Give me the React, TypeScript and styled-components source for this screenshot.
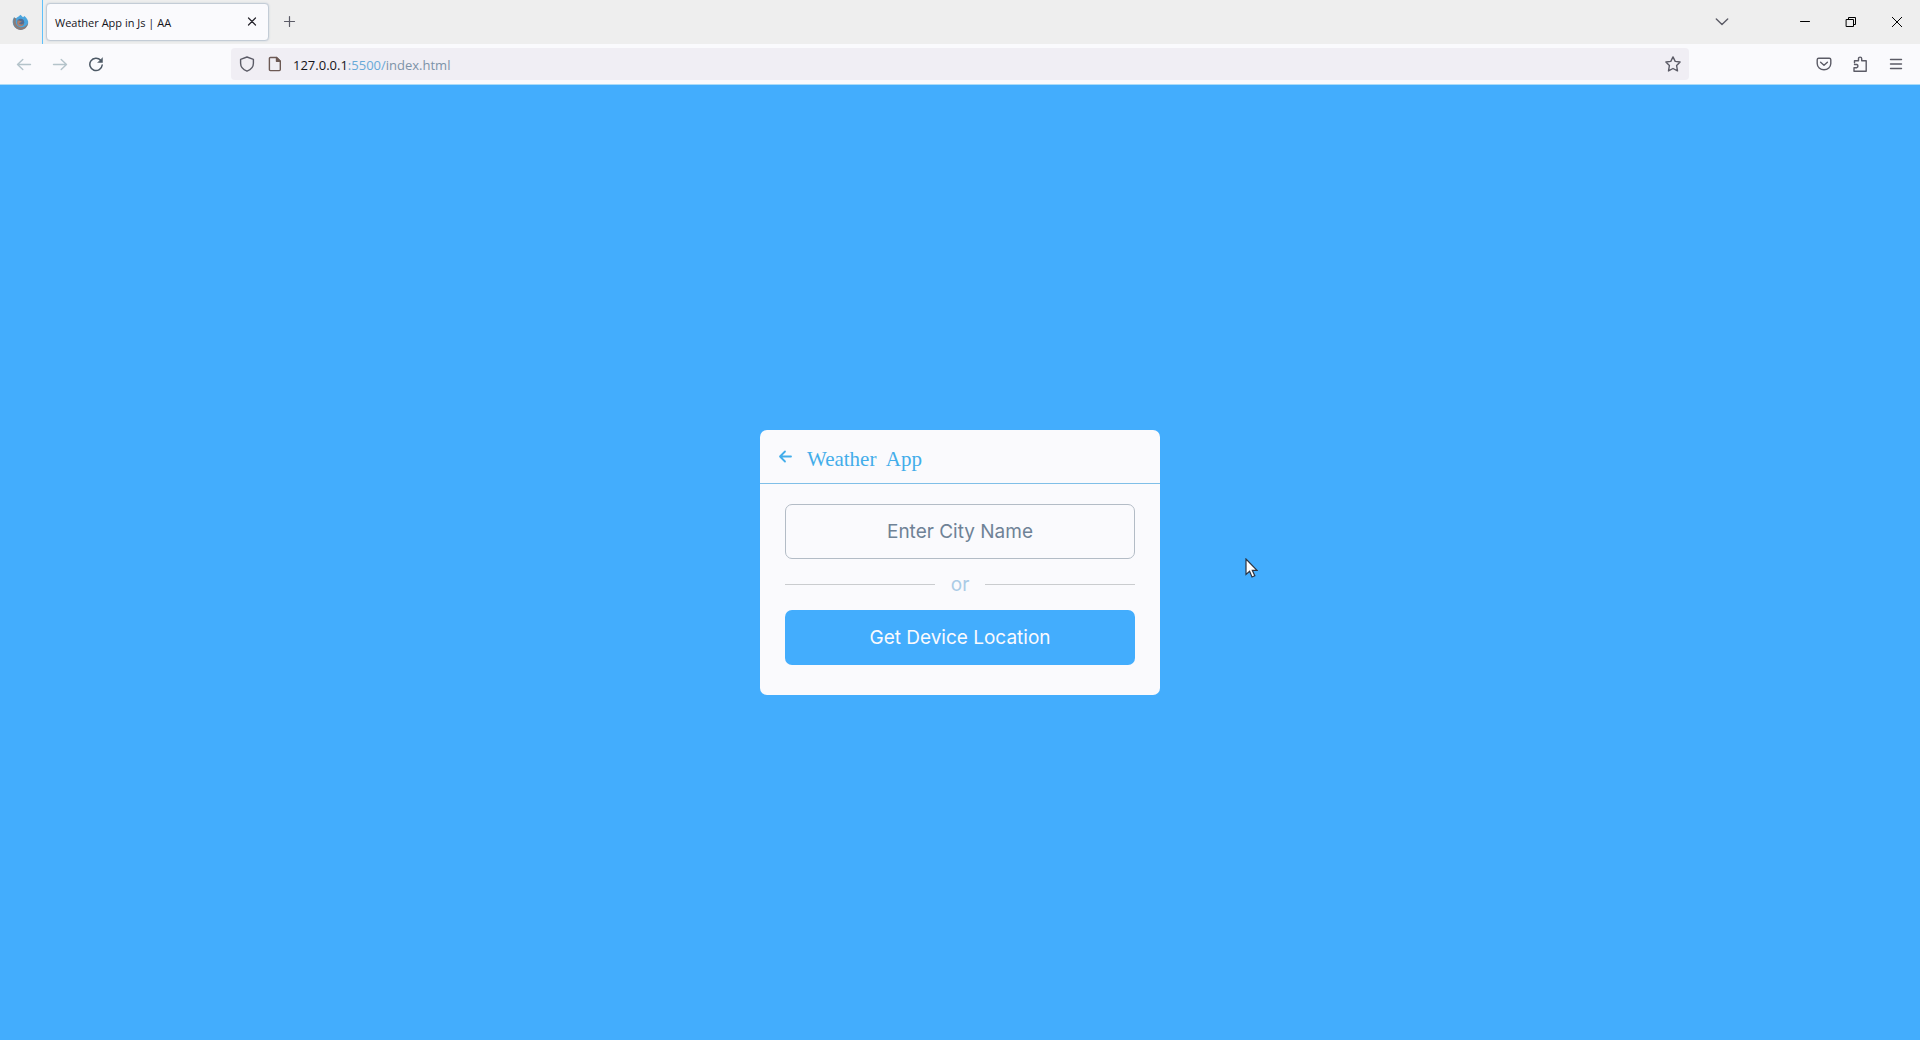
import React from "react";
import styled, { createGlobalStyle } from "styled-components";

const GlobalStyle = createGlobalStyle`
  * { box-sizing: border-box; margin: 0; padding: 0; }
  body { background: #43adfd; }
  button, input { font: inherit; color: inherit; border: none; background: none; outline: none; }
`;

const Window = styled.div`
  display: flex;
  flex-direction: column;
  min-height: 100vh;
  font-family: "Open Sans", sans-serif;
  background: #43adfd;
`;

const TabStrip = styled.div`
  display: flex;
  align-items: center;
  height: 44px;
  background: #eeeeee;
`;

const PinnedArea = styled.div`
  display: flex;
  align-items: center;
  justify-content: center;
  width: 43px;
  height: 44px;
  padding-right: 2px;
  border-right: 1px solid #5fc0fb;
`;

const Tab = styled.div`
  display: flex;
  align-items: center;
  justify-content: space-between;
  width: 223px;
  height: 38px;
  margin: 0 8px 0 3px;
  padding: 0 6px 0 8px;
  border: 1px solid #c3ccd6;
  border-radius: 4px;
  background: #fafafd;
  box-shadow: 0 0 2px #c3ccd6;
  font-size: 11px;
  color: #15141a;
`;

const Spacer = styled.div`
  flex: 1;
`;

const IconButton = styled.button<{ $width?: number; $tone?: string }>`
  display: flex;
  align-items: center;
  justify-content: center;
  flex: none;
  width: ${(p) => p.$width ?? 36}px;
  height: 24px;
  color: ${(p) => p.$tone ?? "#5b5b66"};
`;

const WindowControls = styled.div`
  display: flex;
  margin-left: 42px;
`;

const Toolbar = styled.div`
  display: flex;
  align-items: center;
  height: 41px;
  padding: 0 6px;
  border-bottom: 1px solid #a9dbf8;
  background: #fafafd;
`;

const AddressBar = styled.div`
  display: flex;
  align-items: center;
  flex: 1;
  height: 32px;
  margin: 0 117px;
  padding: 0 2px;
  border-radius: 4px;
  background: #f0eef4;
`;

const Address = styled.a`
  flex: 1;
  padding: 1px 0 0 4px;
  font-size: 13px;
  line-height: 20px;
  text-decoration: none;
  color: #7d93a8;
`;

const Host = styled.span`
  color: #15141a;
`;

const Port = styled.span`
  color: #68a9d8;
`;

const Page = styled.main`
  position: relative;
  display: flex;
  flex: 1;
  align-items: center;
  justify-content: center;
`;

const Card = styled.section`
  width: 400px;
  border-radius: 7px;
  background: #fafafd;
`;

const CardHeader = styled.header`
  display: flex;
  align-items: center;
  gap: 13px;
  height: 54px;
  padding: 0 16px;
  border-bottom: 1px solid #7fbfe8;
  color: #43adea;
`;

const Title = styled.h1`
  padding-top: 4px;
  font-family: "Liberation Serif", serif;
  font-size: 21px;
  font-weight: 400;
  line-height: 24px;
`;

const Form = styled.form`
  display: flex;
  flex-direction: column;
  gap: 12px;
  padding: 20px 25px 30px;
  font-family: Inter, sans-serif;
  font-size: 19px;
`;

const CityInput = styled.input`
  width: 100%;
  height: 55px;
  border: 1px solid #b3bcc6;
  border-radius: 7px;
  text-align: center;
  &::placeholder { color: #6f8296; opacity: 1; }
`;

const Divider = styled.div`
  display: flex;
  align-items: center;
  gap: 16px;
  height: 27px;
  color: #aacbe6;
  &::before, &::after {
    content: "";
    flex: 1;
    height: 1px;
    background: #cacccf;
  }
`;

const LocationButton = styled.button`
  height: 55px;
  border-radius: 7px;
  background: #43adfd;
  color: #fafafd;
`;

const Pointer = styled.svg`
  position: absolute;
  left: calc(50% + 285px);
  top: calc(50% - 5px);
`;

type GlyphProps = { size?: number; width?: number; children: React.ReactNode };

const Glyph = ({ size = 16, width = 1.4, children }: GlyphProps) => (
  <svg width={size} height={size} viewBox="0 0 16 16" fill="none" stroke="currentColor"
    strokeWidth={width} strokeLinecap="round" strokeLinejoin="round" aria-hidden="true">
    {children}
  </svg>
);

const BrowserLogo = () => (
  <svg width="17" height="17" viewBox="0 0 17 17" aria-hidden="true">
    <path d="M2 3.2 4 4.6C5 3 7.2 2.8 8.2.8 10 1.7 10.3 2.8 11 3.2l1.5-1.3C15 4 16.5 6.5 16.2 9.3A7.8 7.5 0 0 1 .7 8.5C.5 6.5 1 4.6 2 3.2Z" fill="#4aa5de" />
    <path d="M1.5 5.5C.2 10 2.8 15.5 8.3 15.9c4.2.3 7.3-2.9 7.7-6.9-2 3.800-5.800 5.200-9 3.800C4.200 11.500 3 8 4.300 4.700L2.300 3.600Z" fill="#8b7c78" />
    <circle cx="8.7" cy="8.3" r="3.5" fill="#536d92" />
    <path d="M5.5 6.8c1.500-.8 2.500.8 4.300.3-.8 1.600-2.200 1.300-2.700 2.500 1.500 1.500 3.600 1 4.800-.4-.3 2.600-2.700 3.600-4.700 2.800-1.800-.7-2.500-3-1.700-5.200Z" fill="#ad806c" />
  </svg>
);

export default function App() {
  return (
    <Window>
      <GlobalStyle />
      <TabStrip>
        <PinnedArea><BrowserLogo /></PinnedArea>
        <Tab>
          <span>Weather App in Js | AA</span>
          <IconButton $width={20} $tone="#25242c" aria-label="Close tab">
            <Glyph width={1.2}><path d="M4.500 4 11.500 11M11.500 4 4.500 11" /></Glyph>
          </IconButton>
        </Tab>
        <IconButton $width={26} aria-label="New tab">
          <Glyph width={1.2}><path d="M7.500 2.500V12.500M2.500 7.500H12.500" /></Glyph>
        </IconButton>
        <Spacer />
        <IconButton aria-label="List all tabs">
          <Glyph><path d="M2.300 5 8 10.500 13.700 5" /></Glyph>
        </IconButton>
        <WindowControls>
          <IconButton $width={46} $tone="#000" aria-label="Minimize">
            <Glyph width={1}><path d="M3.500 7.500H12.500" /></Glyph>
          </IconButton>
          <IconButton $width={46} $tone="#000" aria-label="Restore">
            <Glyph width={1}><path d="M3.500 5.500h7v7h-7zM5.500 5.500v-2h7v7h-2" /></Glyph>
          </IconButton>
          <IconButton $width={46} $tone="#000" aria-label="Close">
            <Glyph width={1}><path d="M3.300 3.300 12.700 12.700M12.700 3.300 3.300 12.700" /></Glyph>
          </IconButton>
        </WindowControls>
      </TabStrip>

      <Toolbar>
        <IconButton $tone="#b4c3ca" aria-label="Back">
          <Glyph><path d="M14.500 8.500H1.500M6.800 3.500 1.500 8.500l5.300 5" /></Glyph>
        </IconButton>
        <IconButton $tone="#b4c3ca" aria-label="Forward">
          <Glyph><path d="M1.500 8.500h13M9.200 3.500 14.500 8.500l-5.300 5" /></Glyph>
        </IconButton>
        <IconButton $tone="#4c5865" aria-label="Reload">
          <Glyph width={1.5}>
            <path d="M12.700 4.300A6.200 6.200 0 1 0 14.200 9" />
            <path d="M14.500 2V6.500H10Z" fill="currentColor" strokeWidth="0.500" />
          </Glyph>
        </IconButton>
        <AddressBar>
          <IconButton $width={28} aria-label="Tracking protection">
            <Glyph><path d="M8 1 14.400 3.300V7.200C14.400 11 11.500 13.800 8 15.200 4.500 13.800 1.600 11 1.600 7.200V3.300Z" /></Glyph>
          </IconButton>
          <IconButton $width={28} $tone="#6c5954" aria-label="Site information">
            <Glyph>
              <path d="M3.400 1.500H9.500L13.300 5.300V13.600a1 1 0 0 1-1 1H3.400a1 1 0 0 1-1-1V2.500a1 1 0 0 1 1-1Z" />
              <path d="M9.500 1.500V5.300H13.300Z" fill="currentColor" />
            </Glyph>
          </IconButton>
          <Address href="#">
            <Host>127.0.0.1</Host><Port>:5500/</Port>index.html
          </Address>
          <IconButton $width={28} aria-label="Bookmark this page">
            <Glyph><path d="M8 .900 10.200 5.400 15.100 6 11.600 9.500 12.500 14.900 8 12.500 3.500 14.900 4.400 9.500.9 6 5.800 5.400Z" /></Glyph>
          </IconButton>
        </AddressBar>
        <IconButton aria-label="Save to Pocket">
          <Glyph>
            <path d="M2.700 2.300H13.300a1.500 1.500 0 0 1 1.500 1.500V7.500a6.800 6.300 0 0 1-13.600 0V3.800a1.500 1.500 0 0 1 1.500-1.500Z" />
            <path d="M4.600 6.300 8 9.300 11.400 6.300" />
          </Glyph>
        </IconButton>
        <IconButton aria-label="Extensions">
          <Glyph><path d="M2.500 6.800V4.700H6.500V2.700a1.600 1.600 0 0 1 3.200 0V4.700H14.200V15.200H2V11.700H4.800a1.700 1.700 0 0 0 0-3.200H2.500" /></Glyph>
        </IconButton>
        <IconButton aria-label="Application menu">
          <Glyph><path d="M2.500 3.500H13.500M2.500 8H13.500M2.500 12.500H13.500" /></Glyph>
        </IconButton>
      </Toolbar>

      <Page>
        <Card>
          <CardHeader>
            <IconButton $width={18} $tone="#43adea" type="button" aria-label="Go back">
              <Glyph width={1.800}><path d="M14 7.500H3M8 2.500 3 7.500l5 5" /></Glyph>
            </IconButton>
            <Title>Weather{"\u00a0 "}App</Title>
          </CardHeader>
          <Form onSubmit={(e) => e.preventDefault()}>
            <CityInput type="text" placeholder="Enter City Name" aria-label="Enter City Name" />
            <Divider>or</Divider>
            <LocationButton type="button">Get Device Location</LocationButton>
          </Form>
        </Card>
        <Pointer width="13" height="21" viewBox="0 0 13 21" aria-hidden="true">
          <path d="M1 1V16.500L4.600 13.300 7 19 9.800 17.800 7.300 12.300H12Z" fill="#fff" stroke="#2c3442" strokeWidth="1.200" />
        </Pointer>
      </Page>
    </Window>
  );
}
